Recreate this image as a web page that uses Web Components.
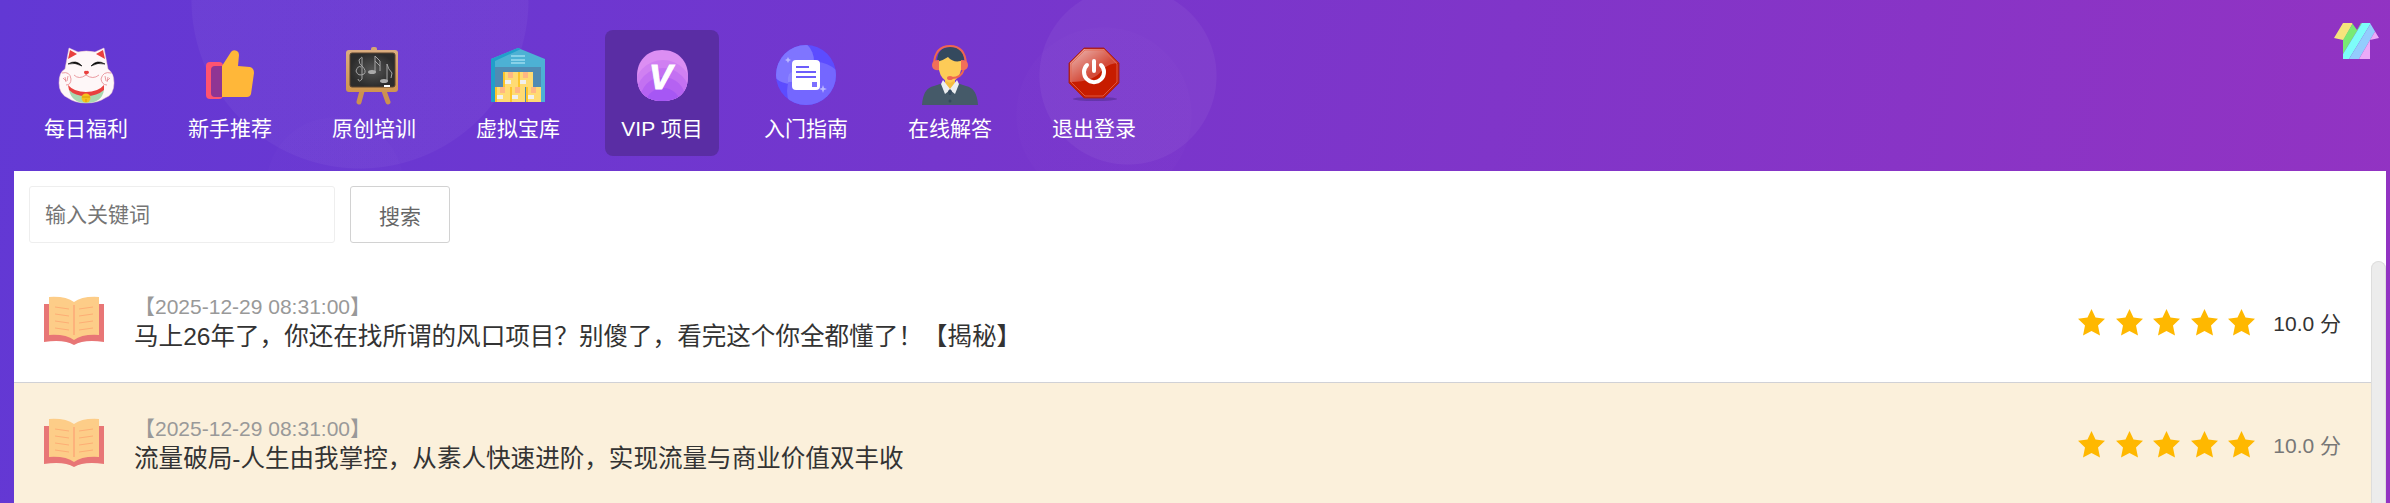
<!DOCTYPE html>
<html lang="zh-CN">
<head>
<meta charset="utf-8">
<meta name="viewport" content="width=device-width, initial-scale=1">
<title>VIP 项目</title>
<style>
  html, body { margin: 0; height: 100%; }
  body {
    overflow: hidden;
    font: 21px "Liberation Sans", "Noto Sans CJK SC", sans-serif;
    color: #333;
  }
</style>
</head>
<body>
<app-page>
  <nav-bar slot="header">
    <nav-item icon="cat">每日福利</nav-item>
    <nav-item icon="thumb">新手推荐</nav-item>
    <nav-item icon="board">原创培训</nav-item>
    <nav-item icon="store">虚拟宝库</nav-item>
    <nav-item icon="vip" active>VIP 项目</nav-item>
    <nav-item icon="guide">入门指南</nav-item>
    <nav-item icon="agent">在线解答</nav-item>
    <nav-item icon="power">退出登录</nav-item>
  </nav-bar>
  <search-bar></search-bar>
  <article-list>
    <article-row date="2025-12-29 08:31:00" score="10.0">马上26年了，你还在找所谓的风口项目？别傻了，看完这个你全都懂了！【揭秘】</article-row>
    <article-row date="2025-12-29 08:31:00" score="10.0" highlight>流量破局-人生由我掌控，从素人快速进阶，实现流量与商业价值双丰收</article-row>
  </article-list>
</app-page>

<script>
const box = '<rect width="15" height="15" fill="#ffdb73"/><rect width="2" height="15" fill="#fdc52c"/><rect x="5" width="5" height="6" fill="#ffb782"/><rect x="2" y="8" width="6" height="4" fill="#f1f0ee"/>';

// All icons are drawn on a 60x60 canvas
const ICONS = {
  cat: `
    <path fill="#fef7f8" stroke="#f3c9cf" stroke-width=".5" d="M13 3 22 7Q30 5 39 7L48 3 52 24Q58 28 58 38Q58 50 49 53Q42 58 30 58Q19 58 12 53Q3 49 3 38Q3 27 9 24Z"/>
    <path fill="#e9403f" d="M14 5 21 9 12 14ZM47 5 40 9 49 14Z"/>
    <path fill="#a9d8b1" d="M13 45Q30 55 48 45Q46 58 30 58Q16 58 13 45Z"/>
    <path fill="#e9403f" d="M12 40Q18 47 30 47Q42 47 48 40L48 45Q41 51 30 51Q19 51 13 45Z"/>
    <path d="M12 19Q20 14 26 21Q19 17 12 19ZM49 19Q41 14 35 21Q42 17 49 19Z" stroke="#000" stroke-width=".6"/>
    <path fill="#e9403f" d="M28 28Q28 25 30 26Q33 25 33 28L30 30Z"/>
    <g fill="none" stroke="#e4848b" stroke-width=".8">
      <path d="M18 30Q23 35 30 30Q37 35 43 30"/>
      <path d="M6 28Q14 26 15 34Q15 40 10 40M7 33 10 36M9 32 10 37M12 31 11 36M55 28Q47 26 45 34Q46 40 51 40M54 33 51 36M52 32 51 37M49 31 50 36"/>
    </g>
    <circle cx="30" cy="53" r="4.5" fill="#f5c21d"/>
    <path d="M26 52H34M30 54V57" stroke="#d89a0b"/>`,
  thumb: `
    <rect x="6" y="17" width="17" height="37" rx="4" fill="#ff5370"/>
    <path fill="#8f3594" d="M22 21V52H15Q11 52 11 48V25Q11 21 15 21Z"/>
    <path fill="#ffb739" d="M22 21 31 7Q33 4 37 6Q39 7 39 10L38 21 50 22Q54 23 54 28L51 49Q50 52 47 52L22 52Z"/>`,
  board: `
    <path d="M18 46 15 57M40 46 44 57" stroke="#cd9150" stroke-width="5" stroke-linecap="round"/>
    <rect x="27" y="2" width="6" height="6" rx="2" fill="#d6a573"/>
    <linearGradient id="wood" x2="0" y2="1"><stop stop-color="#dbad80"/><stop offset="1" stop-color="#cf954f"/></linearGradient>
    <rect x="2" y="5" width="52" height="42" rx="3" fill="url(#wood)"/>
    <radialGradient id="slate"><stop stop-color="#555"/><stop offset="1" stop-color="#2c2c2c"/></radialGradient>
    <rect x="6" y="8" width="45" height="34" rx="2" fill="url(#slate)" stroke="#5c4430"/>
    <g fill="none" stroke="#a5a5a5">
      <path d="M18 34V14Q19 10 15 15Q15 19 18 21Q23 26 20 29Q14 32 12 26Q14 20 17 22M18 34Q15 38 14 34"/>
      <path d="M31 27V11L36 16V26M31 16 36 21M43 36V19Q44 24 48 28L47 33"/>
    </g>
    <g fill="#aaa"><ellipse cx="28" cy="27" rx="4" ry="2"/><ellipse cx="40" cy="36" rx="4" ry="2"/></g>
    <rect x="40" y="40" width="6" height="2" fill="#fff"/>`,
  store: `
    <path fill="#4db1d4" d="M3 57V14L30 3 57 14V57Z"/>
    <path fill="#219fca" d="M3 57V14L30 3 33 4 7 16V57Z"/>
    <rect x="7" y="22" width="46" height="35" fill="#508bb3"/>
    <path d="M23 11H37M23 15H37M23 18H37" stroke="#9bdcee" stroke-width="1.5"/>
    <g transform="translate(15 27)">${box}</g>
    <g transform="translate(30 27)">${box}</g>
    <g transform="translate(7 42)">${box}</g>
    <g transform="translate(22 42)">${box}</g>
    <g transform="translate(38 42)">${box}</g>`,
  vip: `
    <clipPath id="disc"><path d="M30 5C46 5 56 16 56 31C56 47 47 56 30 56C14 56 5 47 5 31C5 16 15 5 30 5Z"/></clipPath>
    <g clip-path="url(#disc)">
      <rect width="60" height="60" fill="#dc8ef3"/>
      <circle cx="31" cy="44" r="29" fill="#d080f2"/>
      <circle cx="31" cy="50" r="27" fill="#c371f2"/>
      <circle cx="31" cy="55" r="23" fill="#b562f2"/>
      <circle cx="31" cy="61" r="18" fill="#a657f4"/>
    </g>
    <text x="17" y="44" fill="#fff" stroke="#fff" font-family="Liberation Sans" font-size="35" font-weight="700" font-style="italic">V</text>`,
  guide: `
    <clipPath id="round"><circle cx="30" cy="30" r="30"/></clipPath>
    <g clip-path="url(#round)">
      <rect width="60" height="60" fill="#5c4cff"/>
      <circle cx="15" cy="16" r="23" fill="#7f75ff"/>
      <circle cx="40" cy="46" r="29" fill="#7467ff"/>
      <path d="M12 37Q11 25 20 27 30 20 38 17 35 37 12 37Z" fill="#8d86ff"/>
    </g>
    <rect x="16" y="15" width="28" height="30" rx="4" fill="#fff"/>
    <path d="M20 22H33M20 27H40M20 32H40" stroke="#6c5dfb" stroke-width="2"/>
    <path d="M36 37H41V42H36Z" fill="#7c70ff"/>
    <path d="M12 12 13 14 15 15 13 16 12 18 11 16 9 15 11 14ZM47 40 48 43 51 44 48 45 47 48 46 45 43 44 46 43Z" fill="#bbb8ff"/>`,
  agent: `
    <path fill="#455a69" d="M2 60Q3 43 14 41L23 38H37L46 41Q57 43 58 60Z"/>
    <path fill="#f6bd40" d="M25 34H35V39L30 46 25 39Z"/>
    <path fill="#fdcb57" d="M19 15Q30 8 41 15V25Q39 35 30 38Q21 35 19 25Z"/>
    <path fill="#34495e" d="M17 17Q17 2 31 2Q44 2 44 15 34 19 28 12Q22 16 17 17Z"/>
    <path fill="none" stroke="#ef6650" stroke-width="2" d="M14 19Q15 1 30 1Q45 1 46 19M44 24Q41 34 30 33"/>
    <path fill="#f26f58" d="M19 15V25Q12 26 12 20Q12 15 19 15ZM41 15V25Q48 26 48 20Q48 15 41 15Z"/>
    <ellipse cx="30" cy="33" rx="3" ry="2" fill="#ef6650"/>
    <path fill="#eceff1" d="M23 35 30 44 37 35 39 39 35 49 30 45 25 49 21 39Z"/>
    <path fill="#34495e" d="M28 46 30 44 32 46 31 50H29Z"/>
    <circle cx="30" cy="56" r="1.5" fill="#34495e"/>`,
  power: `
    <ellipse cx="31" cy="54" rx="22" ry="2" fill="#35206b" opacity=".35"/>
    <linearGradient id="gloss" x2="1" y2="1"><stop stop-color="#eebfba"/><stop offset=".6" stop-color="#d44c3b"/></linearGradient>
    <path fill="#c71c00" stroke="#9d2434" d="M20 3H40L55 18V38L40 53H20L5 38V18Z"/>
    <path fill="url(#gloss)" d="M20 4H40L54 18Q46 18 39 24Q31 37 6 37V18Z"/>
    <path fill="none" stroke="#e4674f" stroke-width=".8" d="M21 5H39L53 19V37L39 51H21L7 37V19Z"/>
    <path fill="none" stroke="#fff" stroke-width="4" stroke-linecap="round" d="M23 20A10 10 0 1 0 37 20M30 16V26"/>`,
  book: `
    <path fill="#e87676" d="M0 12H60V50Q40 47 30 53Q20 47 0 50Z"/>
    <path fill="#fdcd88" d="M5 5Q22 4 30 10Q38 4 55 5V43Q38 42 30 48Q22 42 5 43Z"/>
    <path fill="none" stroke="#fdb27b" stroke-width="2" d="M30 13V43"/>
    <path fill="none" stroke="#fdae75" d="M11 15 25 17M11 22 25 24M11 29 25 31M11 36 25 38M35 17 49 15M35 24 49 22M35 31 49 29M35 38 49 36"/>`
};

const svg = name => `<svg viewBox="0 0 60 60" aria-hidden="true">${ICONS[name] || ''}</svg>`;

class AppPage extends HTMLElement {
  constructor() {
    super();
    this.attachShadow({ mode: 'open' });
    this.shadowRoot.innerHTML = `
      <style>
        :host {
          display: flex;
          flex-direction: column;
          height: 100vh;
          background:
            radial-gradient(circle at 360px 0, #ffffff0a 168px, transparent 169px),
            radial-gradient(circle at 335px 186px, #ffffff03 68px, transparent 69px),
            radial-gradient(circle at 1128px 76px, #ffffff0c 88px, transparent 89px),
            radial-gradient(circle at 1104px 115px, #ffffff03 87px, transparent 88px),
            linear-gradient(100deg, #6238d4, #9333c2);
        }
        main {
          flex: 1;
          min-height: 0;
          display: flex;
          flex-direction: column;
          margin: 0 4px 0 14px;
          background: #fff;
        }
      </style>
      <slot name="header"></slot>
      <main><slot></slot></main>
    `;
  }
}

class NavBar extends HTMLElement {
  constructor() {
    super();
    this.attachShadow({ mode: 'open' });
    this.shadowRoot.innerHTML = `
      <style>
        :host { display: flex; justify-content: space-between; align-items: flex-start; padding-left: 29px; }
        nav { display: flex; gap: 30px; padding: 30px 0 15px; }
        button { margin: 23px 11px 0 0; padding: 0; border: 0; background: none; cursor: pointer; }
        svg { display: block; width: 45px; height: 36px; }
      </style>
      <nav><slot></slot></nav>
      <button type="button" aria-label="换肤">
        <svg viewBox="0 0 45 36" aria-hidden="true">
          <clipPath id="shirt"><path d="M9 0H18L23 7 27 0H36L45 15 36 17V36H9V17L0 15Z"/></clipPath>
          <g clip-path="url(#shirt)">
            <path fill="#f5e47c" d="M0 0H19L9 18H0Z"/>
            <path fill="#78ea74" d="M19 0H28L9 31V17Z"/>
            <path fill="#7dfdf9" d="M28 0H37L15 36H9V31Z"/>
            <path fill="#93cdfd" d="M37 0H46L25 36H15Z"/>
            <path fill="#ecaaf8" d="M46 0V36H25Z"/>
          </g>
        </svg>
      </button>
    `;
  }
}

class NavItem extends HTMLElement {
  constructor() {
    super();
    this.attachShadow({ mode: 'open' });
  }

  connectedCallback() {
    this.shadowRoot.innerHTML = `
      <style>
        :host { display: block; }
        a {
          display: flex;
          flex-direction: column;
          align-items: center;
          box-sizing: border-box;
          width: 114px;
          padding: 15px 0 4px;
          border-radius: 8px;
          color: #fff;
          line-height: 47px;
          text-decoration: none;
        }
        :host([active]) a { background: #5a2da4; }
        svg { width: 60px; height: 60px; }
      </style>
      <a href="#">${svg(this.getAttribute('icon'))}<span><slot></slot></span></a>
    `;
  }
}

class SearchBar extends HTMLElement {
  constructor() {
    super();
    this.attachShadow({ mode: 'open' });
    this.shadowRoot.innerHTML = `
      <style>
        :host { display: block; }
        form { display: flex; gap: 15px; padding: 15px 15px 18px; }
        input, button {
          box-sizing: border-box;
          height: 57px;
          border: 1px solid #eee;
          border-radius: 3px;
          background: #fff;
          font: inherit;
        }
        input { width: 306px; padding: 0 15px; color: #333; }
        input::placeholder { color: #757575; }
        button { padding: 0 28px; border-color: #d2d2d2; color: #666; cursor: pointer; }
      </style>
      <form>
        <input type="text" name="keyword" placeholder="输入关键词" aria-label="输入关键词">
        <button type="button">搜索</button>
      </form>
    `;
  }
}

class ArticleList extends HTMLElement {
  constructor() {
    super();
    this.attachShadow({ mode: 'open' });
    this.shadowRoot.innerHTML = `
      <style>
        :host { display: flex; flex: 1; min-height: 0; overflow: hidden; }
        .rows { flex: 1; }
        .bar {
          box-sizing: border-box;
          width: 15px;
          border: 1px solid #ddd;
          border-bottom: 0;
          border-radius: 8px 8px 0 0;
          background: #ececec;
        }
      </style>
      <div class="rows"><slot></slot></div>
      <div class="bar"></div>
    `;
  }
}

class ArticleRow extends HTMLElement {
  constructor() {
    super();
    this.attachShadow({ mode: 'open' });
  }

  connectedCallback() {
    this.shadowRoot.innerHTML = `
      <style>
        :host {
          display: flex;
          align-items: center;
          gap: 30px;
          box-sizing: border-box;
          min-height: 122px;
          padding: 0 30px;
          border-bottom: 1px solid #d0d1d6;
        }
        :host([highlight]) { background: #fbf0db; }
        svg { width: 60px; height: 60px; }
        .text { flex: 1; line-height: 30px; }
        time { display: block; color: #999; }
        h3 { margin: 0; font-weight: 400; }
        .score { color: #333; }
        :host([highlight]) .score { color: #777; }
        star-rating { margin-right: -12px; }
      </style>
      ${svg('book')}
      <div class="text">
        <time>【${this.getAttribute('date')}】</time>
        <h3><slot></slot></h3>
      </div>
      <star-rating value="5"></star-rating>
      <span class="score">${this.getAttribute('score')} 分</span>
    `;
  }
}

class StarRating extends HTMLElement {
  constructor() {
    super();
    this.attachShadow({ mode: 'open' });
  }

  connectedCallback() {
    const value = parseInt(this.getAttribute('value')) || 0;
    const star = '<svg viewBox="0 0 27 27" aria-hidden="true"><path fill="#ffb800" d="M13.5 0 17.5 8.5 27 9.800 20 16.5 22 26.5 13.5 22 5 26.5 7 16.5 0 9.800 9.5 8.5Z"/></svg>';
    this.shadowRoot.innerHTML = `
      <style>
        :host { display: flex; justify-content: space-between; width: 177px; padding-top: 2px; }
        svg { width: 27px; height: 27px; }
      </style>
      ${star.repeat(value)}
    `;
  }
}

customElements.define('app-page', AppPage);
customElements.define('nav-bar', NavBar);
customElements.define('nav-item', NavItem);
customElements.define('search-bar', SearchBar);
customElements.define('article-list', ArticleList);
customElements.define('star-rating', StarRating);
customElements.define('article-row', ArticleRow);
</script>
</body>
</html>
